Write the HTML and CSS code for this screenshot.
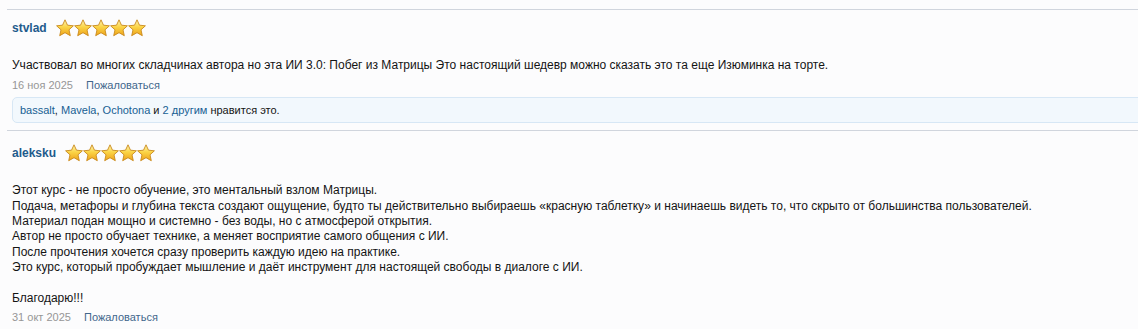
FILE: index.html
```html
<!DOCTYPE html>
<html lang="ru">
<head>
    <meta charset="UTF-8">
    <title>Отзывы</title>
    <link rel="stylesheet" href="styles.css">
</head>
<body>
    <svg width="0" height="0" class="defs">
        <defs>
            <linearGradient id="starFill" x1="0" y1="0" x2="0" y2="1">
                <stop offset="0" stop-color="#fff4b8"/>
                <stop offset="0.45" stop-color="#fbd547"/>
                <stop offset="1" stop-color="#eea21a"/>
            </linearGradient>
            <symbol id="star" viewBox="0 0 18 18">
                <path d="M9 0.8l2.5 5.4 5.9.6-4.4 4 1.3 5.9L9 13.7 3.7 16.7 5 10.8.6 6.8l5.9-.6z" fill="url(#starFill)" stroke="#c8891c" stroke-width="0.9" stroke-linejoin="round"/>
            </symbol>
        </defs>
    </svg>

    <div class="message">
        <div class="message-head">
            <a class="username" href="#">stvlad</a>
            <span class="stars">
                <svg><use href="#star"/></svg><svg><use href="#star"/></svg><svg><use href="#star"/></svg><svg><use href="#star"/></svg><svg><use href="#star"/></svg>
            </span>
        </div>
        <div class="message-text">Участвовал во многих складчинах автора но эта ИИ 3.0: Побег из Матрицы Это настоящий шедевр можно сказать это та еще Изюминка на торте.</div>
        <div class="message-meta">
            <span class="date">16 ноя 2025</span>
            <a class="report" href="#">Пожаловаться</a>
        </div>
        <div class="likes">
            <a href="#">bassalt</a>, <a href="#">Mavela</a>, <a href="#">Ochotona</a> и <a href="#">2 другим</a> нравится это.
        </div>
    </div>

    <div class="message second">
        <div class="message-head">
            <a class="username" href="#">aleksku</a>
            <span class="stars">
                <svg><use href="#star"/></svg><svg><use href="#star"/></svg><svg><use href="#star"/></svg><svg><use href="#star"/></svg><svg><use href="#star"/></svg>
            </span>
        </div>
        <div class="message-text">Этот курс - не просто обучение, это ментальный взлом Матрицы.<br>
Подача, метафоры и глубина текста создают ощущение, будто ты действительно выбираешь «красную таблетку» и начинаешь видеть то, что скрыто от большинства пользователей.<br>
Материал подан мощно и системно - без воды, но с атмосферой открытия.<br>
Автор не просто обучает технике, а меняет восприятие самого общения с ИИ.<br>
После прочтения хочется сразу проверить каждую идею на практике.<br>
Это курс, который пробуждает мышление и даёт инструмент для настоящей свободы в диалоге с ИИ.<br>
<br>
Благодарю!!!</div>
        <div class="message-meta">
            <span class="date">31 окт 2025</span>
            <a class="report" href="#">Пожаловаться</a>
        </div>
        <div class="likes"></div>
    </div>
</body>
</html>
```

FILE: styles.css
```css
body { margin: 0; padding-top: 9px; background: #fcfcfd; font-family: "Liberation Sans", Arial, sans-serif; font-size: 12px; color: #141414; overflow: hidden; }
a { text-decoration: none; color: #176093; }
.defs { position: absolute; }
.message { margin-left: 7px; border-top: 1px solid #d0d5dd; padding: 8px 0 7px 5px; }
.message.second { padding-top: 12px; }
.message-head { display: flex; align-items: center; gap: 9px; height: 20px; }
.username { font-weight: bold; font-size: 12px; color: #1f5b8c; }
.stars { display: flex; gap: 0; }
.stars svg { width: 18px; height: 18px; }
.message-text { margin-top: 20px; line-height: 1.28; }
.second .message-text { margin-top: 20px; }
.message-meta { line-height: 16px; margin-top: 4px; font-size: 11px; }
.second .message-meta { margin-top: 3px; }
.date { color: #969696; margin-right: 10px; }
.report { color: #42678c; }
.likes { margin-top: 4px; margin-right: -10px; height: 24px; line-height: 24px; padding-left: 7px; font-size: 11px; border: 1px solid #d7e7f5; border-radius: 5px; background: #f2f8fd; color: #141414; }
```
